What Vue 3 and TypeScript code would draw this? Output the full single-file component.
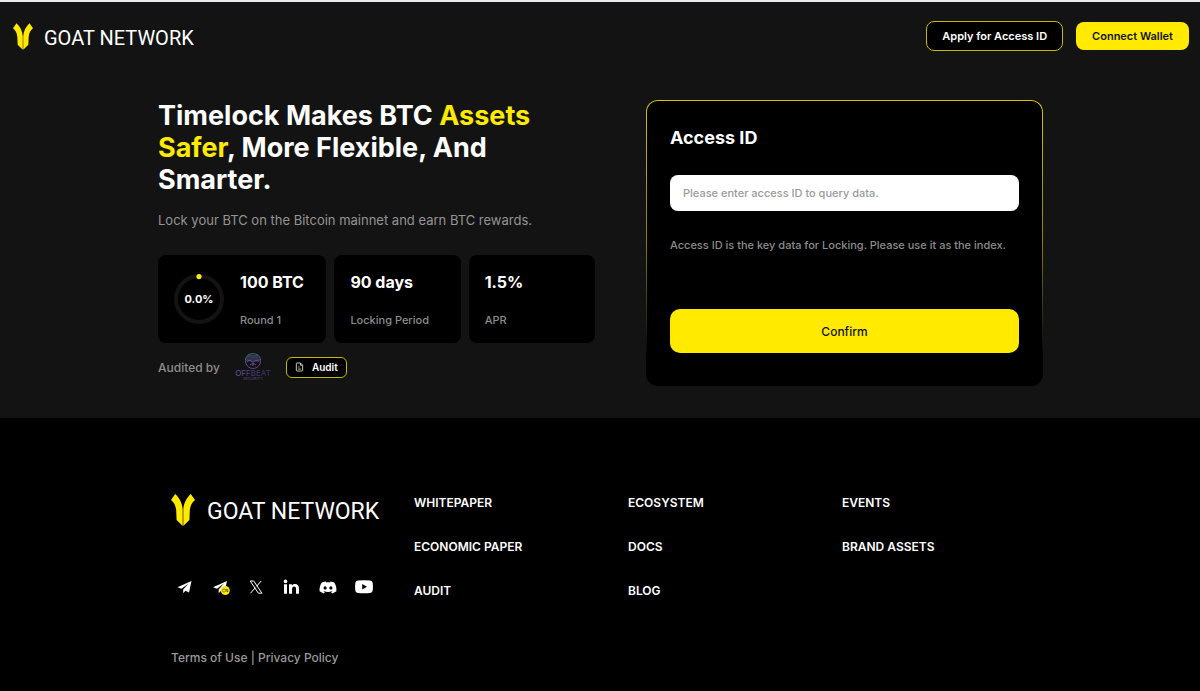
<script setup lang="ts">
import { ref } from 'vue'

interface Stat {
  value: string
  label: string
  progress?: string
}

const accessId = ref('')

const stats: Stat[] = [
  { value: '100 BTC', label: 'Round 1', progress: '0.0%' },
  { value: '90 days', label: 'Locking Period' },
  { value: '1.5%', label: 'APR' },
]

const linkColumns: string[][] = [
  ['WHITEPAPER', 'ECONOMIC PAPER', 'AUDIT'],
  ['ECOSYSTEM', 'DOCS', 'BLOG'],
  ['EVENTS', 'BRAND ASSETS'],
]
</script>

<template>
  <div class="page">
    <header class="topbar">
      <a class="brand" href="#" aria-label="GOAT NETWORK">
        <svg class="brand-mark" viewBox="0 0 24 32" aria-hidden="true">
          <path d="M4.200 0 0 6C3.200 8.500 4.800 12 5.200 16.500L5.600 26 11.700 32V15.500C11.300 9.500 8.600 4 4.200 0Z" />
          <path d="M19.800 0 24 6C20.800 8.500 19.200 12 18.800 16.500L18.400 26 12.300 32V15.500C12.700 9.500 15.400 4 19.800 0Z" />
        </svg>
        <span class="brand-name">GOAT NETWORK</span>
      </a>
      <div class="actions">
        <button class="btn btn-outline" type="button">Apply for Access ID</button>
        <button class="btn btn-solid" type="button">Connect Wallet</button>
      </div>
    </header>

    <main class="hero">
      <section class="intro">
        <h1>Timelock Makes BTC <em>Assets Safer</em>, More Flexible, And Smarter.</h1>
        <p class="lead">Lock your BTC on the Bitcoin mainnet and earn BTC rewards.</p>
        <div class="stats">
          <div v-for="s in stats" :key="s.label" class="stat">
            <div v-if="s.progress" class="ring">
              <svg viewBox="0 0 50 50" aria-hidden="true">
                <circle cx="25" cy="25" r="23" fill="none" stroke="#131313" stroke-width="4" />
                <circle cx="25" cy="2.600" r="2.600" fill="#ffea00" />
              </svg>
              <span>{{ s.progress }}</span>
            </div>
            <div class="stat-text">
              <strong>{{ s.value }}</strong>
              <span>{{ s.label }}</span>
            </div>
          </div>
        </div>
        <div class="audit">
          <span>Audited by</span>
          <svg class="offbeat" viewBox="0 0 40 28" role="img" aria-label="Offbeat Security">
            <defs>
              <linearGradient id="ob" x1="0" y1="0" x2="0.300" y2="1">
                <stop offset="0" stop-color="#3f7f8c" />
                <stop offset="1" stop-color="#7a3fa8" />
              </linearGradient>
              <linearGradient id="obt" x1="0" y1="0" x2="1" y2="0">
                <stop offset="0" stop-color="#7a50b8" />
                <stop offset="0.500" stop-color="#38466c" />
                <stop offset="1" stop-color="#3f2c60" />
              </linearGradient>
            </defs>
            <g fill="none" stroke="url(#ob)" stroke-width="0.900">
              <path d="M12.500 7.500C12.500 3 16 .7 20 .7s7.500 2.300 7.500 6.800c0 4.500-3.200 8-7.500 8s-7.500-3.500-7.500-8Z" />
              <path d="M13.500 5h13M14.500 3h11M13 7h14" />
              <path d="M14 8.500c2-1.500 4-1 5.200.5M26 8.500c-2-1.500-4-1-5.200.5M20 8v5M17 12c1.500-1.500 4.500-1.500 6 0" />
            </g>
            <text x="20" y="22.500" text-anchor="middle" font-size="8" font-weight="400" fill="url(#obt)">OFFBEAT</text>
            <text x="20" y="27" text-anchor="middle" font-size="4" fill="#56377c">SECURITY</text>
          </svg>
          <button class="audit-btn" type="button">
            <svg viewBox="0 0 10 11" aria-hidden="true">
              <path d="M6 1H2.200Q1.500 1 1.500 1.700V9.300Q1.500 10 2.200 10H7.800Q8.500 10 8.500 9.300V3.500ZM6 1V3.500H8.500" fill="none" stroke="#d8d8d8" />
              <path d="M3.500 5.500H5M3.500 7.800H6.500" stroke="#ffea00" />
            </svg>
            Audit
          </button>
        </div>
      </section>

      <form class="access" @submit.prevent>
        <label for="access-id">Access ID</label>
        <input id="access-id" v-model="accessId" type="text" placeholder="Please enter access ID to query data." />
        <p>Access ID is the key data for Locking. Please use it as the index.</p>
        <button class="confirm" type="submit">Confirm</button>
      </form>
    </main>

    <footer class="footer">
      <div class="footer-inner">
        <div class="footer-brand">
          <a class="brand brand-large" href="#" aria-label="GOAT NETWORK">
            <svg class="brand-mark" viewBox="0 0 24 32" aria-hidden="true">
              <path d="M4.200 0 0 6C3.200 8.500 4.800 12 5.200 16.500L5.600 26 11.700 32V15.500C11.300 9.500 8.600 4 4.200 0Z" />
              <path d="M19.800 0 24 6C20.800 8.500 19.200 12 18.800 16.500L18.400 26 12.300 32V15.500C12.700 9.500 15.400 4 19.800 0Z" />
            </svg>
            <span class="brand-name">GOAT NETWORK</span>
          </a>
          <nav class="social" aria-label="Social">
            <a href="#" aria-label="Telegram">
              <svg viewBox="0 0 20 20"><path d="M17.500 4 3.500 10.200l4 1.600 7-5.200-5.300 6v3.600l2.300-2.500 3.500 1.800Z" /></svg>
            </a>
            <a href="#" aria-label="Telegram CN">
              <svg viewBox="0 0 20 20">
                <path d="M17 4 3 10.200l4 1.600 7-5.200-5.300 6v3.600l2.300-2.500 3.500 1.800Z" />
                <circle cx="15.300" cy="13.500" r="4.500" fill="#ffea00" />
                <path d="M14.800 12.300a1.500 1.500 0 1 0 0 2.400M15.800 15v-3l2 3v-3" fill="none" stroke="#4a4400" stroke-width="0.700" />
              </svg>
            </a>
            <a href="#" aria-label="X">
              <svg viewBox="0 0 20 20"><path d="M4.200 4h3.500l8.200 12.200h-3.500ZM15.200 4l-4.700 5.300M9.300 10.700 4.500 16.200" fill="none" stroke="#fff" /></svg>
            </a>
            <a href="#" aria-label="LinkedIn">
              <svg viewBox="0 0 20 20"><path d="M2 7.200h3v9.600H2ZM7 7.200h2.900v1.400c.6-1 1.600-1.600 2.900-1.600 2.900 0 4.200 1.700 4.200 4.700v5.100h-3v-4.700c0-1.700-.5-2.500-1.800-2.500-1.400 0-2.100.9-2.100 2.700v4.500H7Z" /><circle cx="3.500" cy="4.400" r="1.800" /></svg>
            </a>
            <a href="#" aria-label="Discord">
              <svg viewBox="0 0 20 20"><path d="M7.400 4.500c-1.400.2-2.600.6-3.700 1.100C1.800 8.600 1.400 11.500 1.600 14.300c1.500 1.100 2.900 1.700 4.300 2.100l1-1.500c-.5-.2-1-.4-1.400-.7l.3-.3c2.700 1.300 5.700 1.300 8.400 0l.3.3c-.4.300-.9.500-1.400.7l1 1.500c1.400-.4 2.800-1 4.300-2.100.3-3.300-.5-6.200-2.100-8.700-1.100-.5-2.300-.9-3.700-1.100l-.5 1c-1.200-.2-2.400-.2-3.600 0ZM7.100 9.200c.9 0 1.500.8 1.500 1.700s-.7 1.700-1.500 1.700-1.500-.8-1.500-1.700.6-1.700 1.500-1.700ZM12.900 9.200c.8 0 1.500.8 1.500 1.700s-.7 1.700-1.500 1.700-1.500-.8-1.500-1.700.6-1.700 1.500-1.700Z" /></svg>
            </a>
            <a href="#" aria-label="YouTube">
              <svg viewBox="0 0 20 20"><path fill-rule="evenodd" d="M4 3.500Q10 3 16 3.500 18.500 3.700 18.700 6 19.200 10 18.700 13.500 18.500 15.800 16 16 10 16.600 4 16 1.500 15.800 1.300 13.500.8 10 1.300 6 1.500 3.700 4 3.500ZM8.200 7v5.600L13 9.800Z" /></svg>
            </a>
          </nav>
        </div>
        <ul v-for="(col, i) in linkColumns" :key="i" class="links">
          <li v-for="l in col" :key="l"><a href="#">{{ l }}</a></li>
        </ul>
        <div class="legal"><a href="#">Terms of Use</a> | <a href="#">Privacy Policy</a></div>
      </div>
    </footer>
  </div>
</template>

<style>
body {
  margin: 0;
  background: #000;
}
</style>

<style scoped>
.page {
  min-height: 100vh;
  box-sizing: border-box;
  border-top: 2px solid #e8eaed;
  background: #000;
  color: #fff;
  font-family: Inter, "Liberation Sans", sans-serif;
  font-size: 12px;
}
a {
  color: inherit;
  text-decoration: none;
}
button,
input {
  font-family: inherit;
  box-sizing: border-box;
}
button {
  cursor: pointer;
}
.topbar {
  display: flex;
  justify-content: space-between;
  align-items: center;
  height: 68px;
  padding: 0 11px 0 13px;
  background: #131313;
}
.brand {
  display: flex;
  align-items: center;
  gap: 11px;
}
.brand-mark {
  width: 20px;
  height: 27px;
  fill: #ffea00;
}
.brand-name {
  font-family: Roboto, "Liberation Sans", sans-serif;
  font-size: 20px;
  line-height: 24px;
  font-weight: 400;
  white-space: nowrap;
  padding-top: 3px;
}
.brand-large {
  gap: 12px;
}
.brand-large .brand-mark {
  width: 24px;
  height: 32px;
}
.brand-large .brand-name {
  font-size: 23px;
}
.actions {
  display: flex;
  align-items: center;
  gap: 13px;
}
.btn {
  height: 28px;
  padding: 0 16px;
  border: 0;
  border-radius: 8px;
  font-size: 11px;
  font-weight: 600;
}
.btn-outline {
  height: 30px;
  padding: 0 15px;
  border: 1px solid #c8b800;
  background: #000;
  color: #fff;
}
.btn-solid {
  background: #ffea00;
  color: #131313;
}
.hero {
  display: grid;
  grid-template-columns: minmax(0, 437fr) minmax(0, 397fr);
  column-gap: 51px;
  padding: 30px max(20px, calc(50% - 443px)) 32px max(20px, calc(50% - 442px));
  background: #131313;
}
h1 {
  margin: 0;
  font-size: 27px;
  line-height: 32px;
  font-weight: 700;
  max-width: 400px;
}
h1 em {
  font-style: normal;
  color: #ffea00;
}
.lead {
  margin: 15px 0 26px;
  font-size: 13px;
  line-height: 18px;
  font-weight: 400;
  color: #949494;
}
.stats {
  display: grid;
  grid-template-columns: 4fr 3fr 3fr;
  gap: 8px;
}
.stat {
  display: flex;
  align-items: center;
  gap: 16px;
  height: 88px;
  padding: 0 16px;
  box-sizing: border-box;
  border-radius: 8px;
  background: #000;
}
.ring {
  display: grid;
  place-items: center;
  width: 50px;
  height: 50px;
}
.ring > * {
  grid-area: 1 / 1;
}
.ring svg {
  width: 50px;
  height: 50px;
}
.ring span {
  font-size: 11px;
  font-weight: 700;
}
.stat-text {
  display: flex;
  flex-direction: column;
  gap: 19px;
  padding-top: 2px;
  white-space: nowrap;
}
.stat-text strong {
  font-size: 16px;
  line-height: 20px;
  font-weight: 700;
}
.stat-text span {
  font-size: 11px;
  line-height: 18px;
  font-weight: 500;
  color: #8c8c8c;
}
.audit {
  display: flex;
  align-items: center;
  gap: 13px;
  height: 30px;
  margin-top: 9px;
  font-weight: 500;
  color: #8c8c8c;
}
.offbeat {
  width: 40px;
  height: 28px;
}
.audit-btn {
  display: flex;
  align-items: center;
  gap: 8px;
  height: 21px;
  padding: 0 8px;
  border: 1px solid #c8b800;
  border-radius: 6px;
  background: #000;
  color: #fff;
  font-size: 10px;
  font-weight: 600;
}
.audit-btn svg {
  width: 9px;
  height: 10px;
}
.access {
  display: flex;
  flex-direction: column;
  padding: 25px 23px 32px;
  border: 1px solid transparent;
  border-radius: 12px;
  background:
    linear-gradient(#000, #000) padding-box,
    linear-gradient(#d6c500, #8a7f00 50%, #000 90%) border-box;
}
.access label {
  font-size: 18px;
  line-height: 24px;
  font-weight: 700;
}
.access input {
  width: 100%;
  height: 36px;
  margin-top: 25px;
  padding: 0 13px;
  border: 0;
  border-radius: 8px;
  background: #fff;
  color: #131313;
  font-size: 11px;
  font-weight: 500;
}
.access input::placeholder {
  color: #9a9a9a;
  opacity: 1;
}
.access p {
  margin: 25px 0 55px;
  font-size: 11px;
  line-height: 18px;
  font-weight: 500;
  color: #8c8c8c;
}
.confirm {
  height: 44px;
  border: 0;
  border-radius: 10px;
  background: #ffea00;
  color: #131313;
  font-size: 12px;
  font-weight: 500;
}
.footer {
  padding: 76px 20px 20px;
}
.footer-inner {
  display: grid;
  grid-template-columns: 243fr 214fr 214fr 214fr;
  max-width: 885px;
  margin: 0 auto;
  padding-left: 27px;
}
.social {
  display: flex;
  gap: 16px;
  margin-top: 51px;
  padding-left: 3px;
}
.social a,
.social svg {
  display: block;
  width: 20px;
  height: 20px;
  fill: #fff;
}
.links {
  margin: 0;
  padding: 0;
  list-style: none;
}
.links li {
  height: 44px;
  line-height: 18px;
  font-weight: 600;
}
.legal {
  grid-column: 1 / -1;
  margin-top: 23px;
  line-height: 18px;
  color: #9a9a9a;
  font-weight: 500;
}
</style>
